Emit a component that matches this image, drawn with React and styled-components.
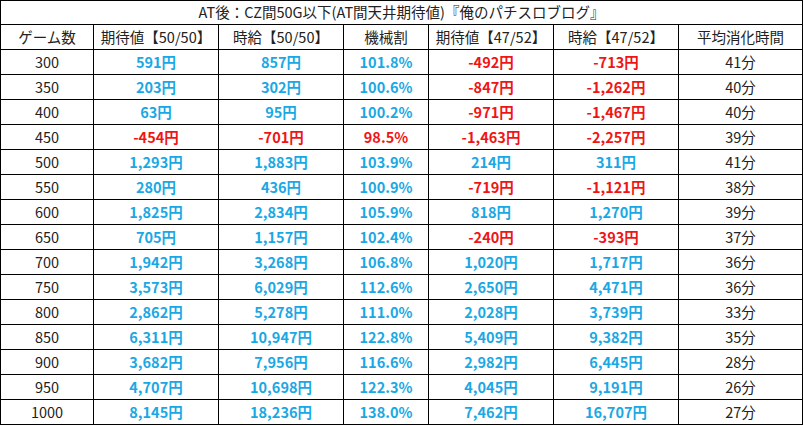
import styled, { createGlobalStyle } from "styled-components";

const GlobalStyle = createGlobalStyle`
    body {
        margin: 0;
        background: #fff;
        font-family: "Noto Sans CJK JP", "Noto Sans", sans-serif;
    }
`;

const columns = [
    { label: "ゲーム数", width: 93 },
    { label: "期待値【50/50】", width: 125 },
    { label: "時給【50/50】", width: 125 },
    { label: "機械割", width: 85 },
    { label: "期待値【47/52】", width: 125 },
    { label: "時給【47/52】", width: 125 },
    { label: "平均消化時間", width: 124 },
];

// ゲーム数, 期待値, 時給, 機械割, 期待値(47/52), 時給(47/52), 消化時間
const rows = [
    ["300", "591", "857", "101.8", "-492", "-713", "41"],
    ["350", "203", "302", "100.6", "-847", "-1,262", "40"],
    ["400", "63", "95", "100.2", "-971", "-1,467", "40"],
    ["450", "-454", "-701", "98.5", "-1,463", "-2,257", "39"],
    ["500", "1,293", "1,883", "103.9", "214", "311", "41"],
    ["550", "280", "436", "100.9", "-719", "-1,121", "38"],
    ["600", "1,825", "2,834", "105.9", "818", "1,270", "39"],
    ["650", "705", "1,157", "102.4", "-240", "-393", "37"],
    ["700", "1,942", "3,268", "106.8", "1,020", "1,717", "36"],
    ["750", "3,573", "6,029", "112.6", "2,650", "4,471", "36"],
    ["800", "2,862", "5,278", "111.0", "2,028", "3,739", "33"],
    ["850", "6,311", "10,947", "122.8", "5,409", "9,382", "35"],
    ["900", "3,682", "7,956", "116.6", "2,982", "6,445", "28"],
    ["950", "4,707", "10,698", "122.3", "4,045", "9,191", "26"],
    ["1000", "8,145", "18,236", "138.0", "7,462", "16,707", "27"],
];

const Table = styled.table`
    width: 803px;
    table-layout: fixed;
    border-collapse: collapse;
    color: #222;
    font-size: 14.5px;
    line-height: 1;
`;

const TitleCell = styled.th`
    height: 23px;
    padding: 0;
    border: 1px solid #000;
    font-weight: normal;
    text-align: center;
`;

const HeadCell = styled.th`
    height: 24px;
    padding: 0;
    border: 1px solid #000;
    font-weight: normal;
    text-align: center;
    white-space: nowrap;
`;

const Row = styled.tr`
    height: 25px;
`;

const Cell = styled.td`
    padding: 0;
    border: 1px solid #000;
    text-align: center;
    white-space: nowrap;
    font-weight: ${(p) => (p.$tone ? "bold" : "normal")};
    color: ${(p) => (p.$tone === "minus" ? "#f01515" : p.$tone === "plus" ? "#1aa8e4" : "#222")};
`;

const toneOf = (value, isRate) => {
    const n = Number(value.replace(/,/g, ""));
    if (isRate) return n < 100 ? "minus" : "plus";
    return n < 0 ? "minus" : "plus";
};

const App = () => {
    return (
        <>
            <GlobalStyle />
            <Table>
                <colgroup>
                    {columns.map((c) => (
                        <col key={c.label} style={{ width: c.width }} />
                    ))}
                </colgroup>
                <thead>
                    <tr>
                        <TitleCell colSpan={7}>AT後：CZ間50G以下(AT間天井期待値)『俺のパチスロブログ』</TitleCell>
                    </tr>
                    <tr>
                        {columns.map((c) => (
                            <HeadCell key={c.label}>{c.label}</HeadCell>
                        ))}
                    </tr>
                </thead>
                <tbody>
                    {rows.map(([games, ev, wage, rate, ev2, wage2, time]) => (
                        <Row key={games}>
                            <Cell>{games}</Cell>
                            <Cell $tone={toneOf(ev)}>{ev}円</Cell>
                            <Cell $tone={toneOf(wage)}>{wage}円</Cell>
                            <Cell $tone={toneOf(rate, true)}>{rate}%</Cell>
                            <Cell $tone={toneOf(ev2)}>{ev2}円</Cell>
                            <Cell $tone={toneOf(wage2)}>{wage2}円</Cell>
                            <Cell>{time}分</Cell>
                        </Row>
                    ))}
                </tbody>
            </Table>
        </>
    );
};

export default App;
